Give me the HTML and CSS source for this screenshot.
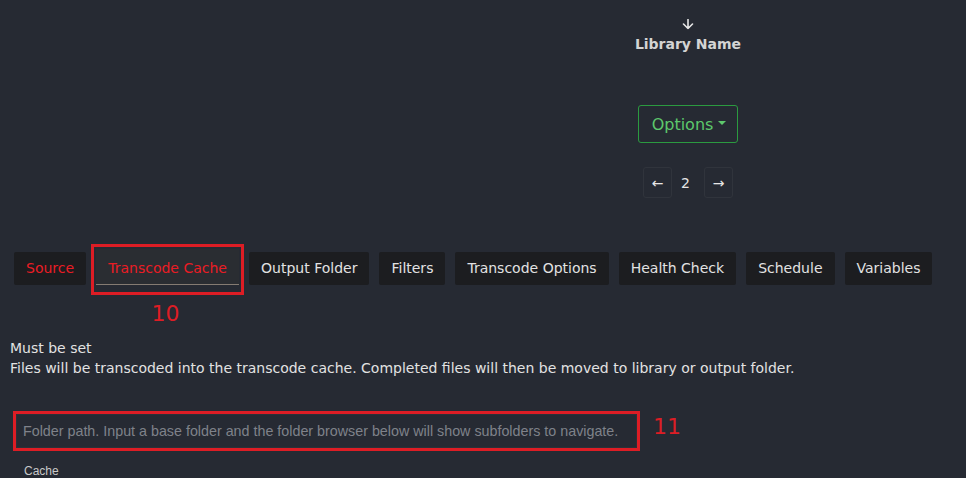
FILE: index.html
```html
<!DOCTYPE html>
<html>
<head>
<meta charset="utf-8">
<link rel="stylesheet" href="styles.css">
</head>
<body>
<div class="top">
  <div class="col">
    <svg class="sort-arrow" width="12" height="11" viewBox="0 0 12 11" aria-label="sorted descending">
      <path d="M6 0.5 V9.5 M1.5 5 L6 9.5 L10.5 5" fill="none" stroke="#e6e6e6" stroke-width="1.6" stroke-linecap="round" stroke-linejoin="round"/>
    </svg>
    <div class="col-title">Library Name</div>
    <button class="options">Options<span class="caret"></span></button>
    <div class="pager">
      <span class="pg-btn">←</span>
      <span class="pg-num">2</span>
      <span class="pg-btn">→</span>
    </div>
  </div>
</div>
<div class="tabs">
  <button class="tab tab-red">Source</button>
  <div class="annot annot-tab">
    <button class="tab tab-active">Transcode Cache</button>
    <span class="annot-num num-below">10</span>
  </div>
  <button class="tab">Output Folder</button>
  <button class="tab">Filters</button>
  <button class="tab">Transcode Options</button>
  <button class="tab">Health Check</button>
  <button class="tab">Schedule</button>
  <button class="tab">Variables</button>
</div>
<div class="desc">
  <p>Must be set</p>
  <p>Files will be transcoded into the transcode cache. Completed files will then be moved to library or output folder.</p>
</div>
<div class="field">
  <div class="annot annot-input">
    <input class="path" type="text" placeholder="Folder path. Input a base folder and the folder browser below will show subfolders to navigate.">
    <span class="annot-num num-right">11</span>
  </div>
  <div class="cache-label">Cache</div>
</div>
</body>
</html>
```
FILE: styles.css
```css
html, body {
  margin: 0;
  padding: 0;
  background: #262a33;
  height: 100%;
  overflow: hidden;
}
body {
  font-family: "DejaVu Sans", sans-serif;
  color: #e2e2e2;
}
.top {
  padding-top: 19px;
  padding-left: 588px;
}
.col {
  width: 200px;
  display: flex;
  flex-direction: column;
  align-items: center;
}
.sort-arrow {
  display: block;
}
.col-title {
  font-size: 14px;
  font-weight: bold;
  line-height: 17px;
  margin-top: 6px;
  color: #d4d4d4;
}
.options {
  margin-top: 52px;
  width: 100px;
  height: 38px;
  box-sizing: border-box;
  border: 1px solid #2b9a40;
  border-radius: 3px;
  background: transparent;
  color: #5dc86c;
  font-family: "DejaVu Sans", sans-serif;
  font-size: 16px;
  display: flex;
  align-items: center;
  justify-content: center;
  padding: 0 0 0 2px;
}
.caret {
  display: inline-block;
  margin-left: 5px;
  margin-bottom: 3px;
  border-top: 4px solid #5dc86c;
  border-left: 4px solid transparent;
  border-right: 4px solid transparent;
}
.pager {
  margin-top: 24px;
  display: flex;
  align-items: center;
}
.pg-btn {
  width: 29px;
  height: 31px;
  box-sizing: border-box;
  border: 1px solid #30343c;
  border-radius: 3px;
  display: flex;
  align-items: center;
  justify-content: center;
  font-size: 14px;
  color: #e6e6e6;
}
.pg-num {
  width: 32px;
  box-sizing: border-box;
  padding-right: 5px;
  text-align: center;
  font-size: 14px;
  color: #e6e6e6;
}
.tabs {
  margin-top: 54px;
  padding-left: 14px;
  display: flex;
  align-items: flex-start;
  gap: 10px;
}
.tab {
  height: 33px;
  padding: 0 12px;
  border: none;
  border-radius: 2px;
  background: #1c1d20;
  color: #e2e2e2;
  font-family: "DejaVu Sans", sans-serif;
  font-size: 14px;
  line-height: 33px;
  white-space: nowrap;
}
.tab-red {
  color: #ea1c24;
}
.annot {
  position: relative;
  outline: 3px solid #dd1d25;
}
.annot-tab {
  margin-top: -3px;
  height: 41px;
  outline-offset: 2px;
}
.tab-active {
  display: block;
  height: 36px;
  line-height: 39px;
  width: 143px;
  padding: 0;
  background: #2a2d32;
  color: #ea1c24;
  border-radius: 0;
  border-bottom: 1px solid #857b72;
}
.annot-num {
  position: absolute;
  color: #dd1d25;
  font-size: 22px;
  line-height: 26px;
}
.num-below {
  top: 52px;
  left: 0;
  right: 0;
  text-align: center;
  margin-left: -4px;
}
.num-right {
  left: calc(100% + 16px);
  top: 0;
}
.desc {
  margin-top: 48px;
  padding-left: 10px;
  font-size: 14px;
  line-height: 20px;
  color: #e2e2e2;
}
.desc p {
  margin: 0;
}
.field {
  margin-top: 36px;
  padding-left: 16px;
}
.annot-input {
  width: 621px;
  height: 34px;
}
.path {
  display: block;
  width: 621px;
  height: 34px;
  box-sizing: border-box;
  margin: 0;
  padding: 0 6px;
  border: 1px solid #2c3038;
  background: #262a33;
  color: #e2e2e2;
  font-family: "Liberation Sans", Arial, sans-serif;
  font-size: 14.3px;
  outline: none;
}
.path::placeholder {
  color: #7f828a;
}
.cache-label {
  margin-top: 16px;
  padding-left: 8px;
  font-family: "Liberation Sans", Arial, sans-serif;
  font-size: 12px;
  line-height: 14px;
  color: #c9c9c9;
}
```
